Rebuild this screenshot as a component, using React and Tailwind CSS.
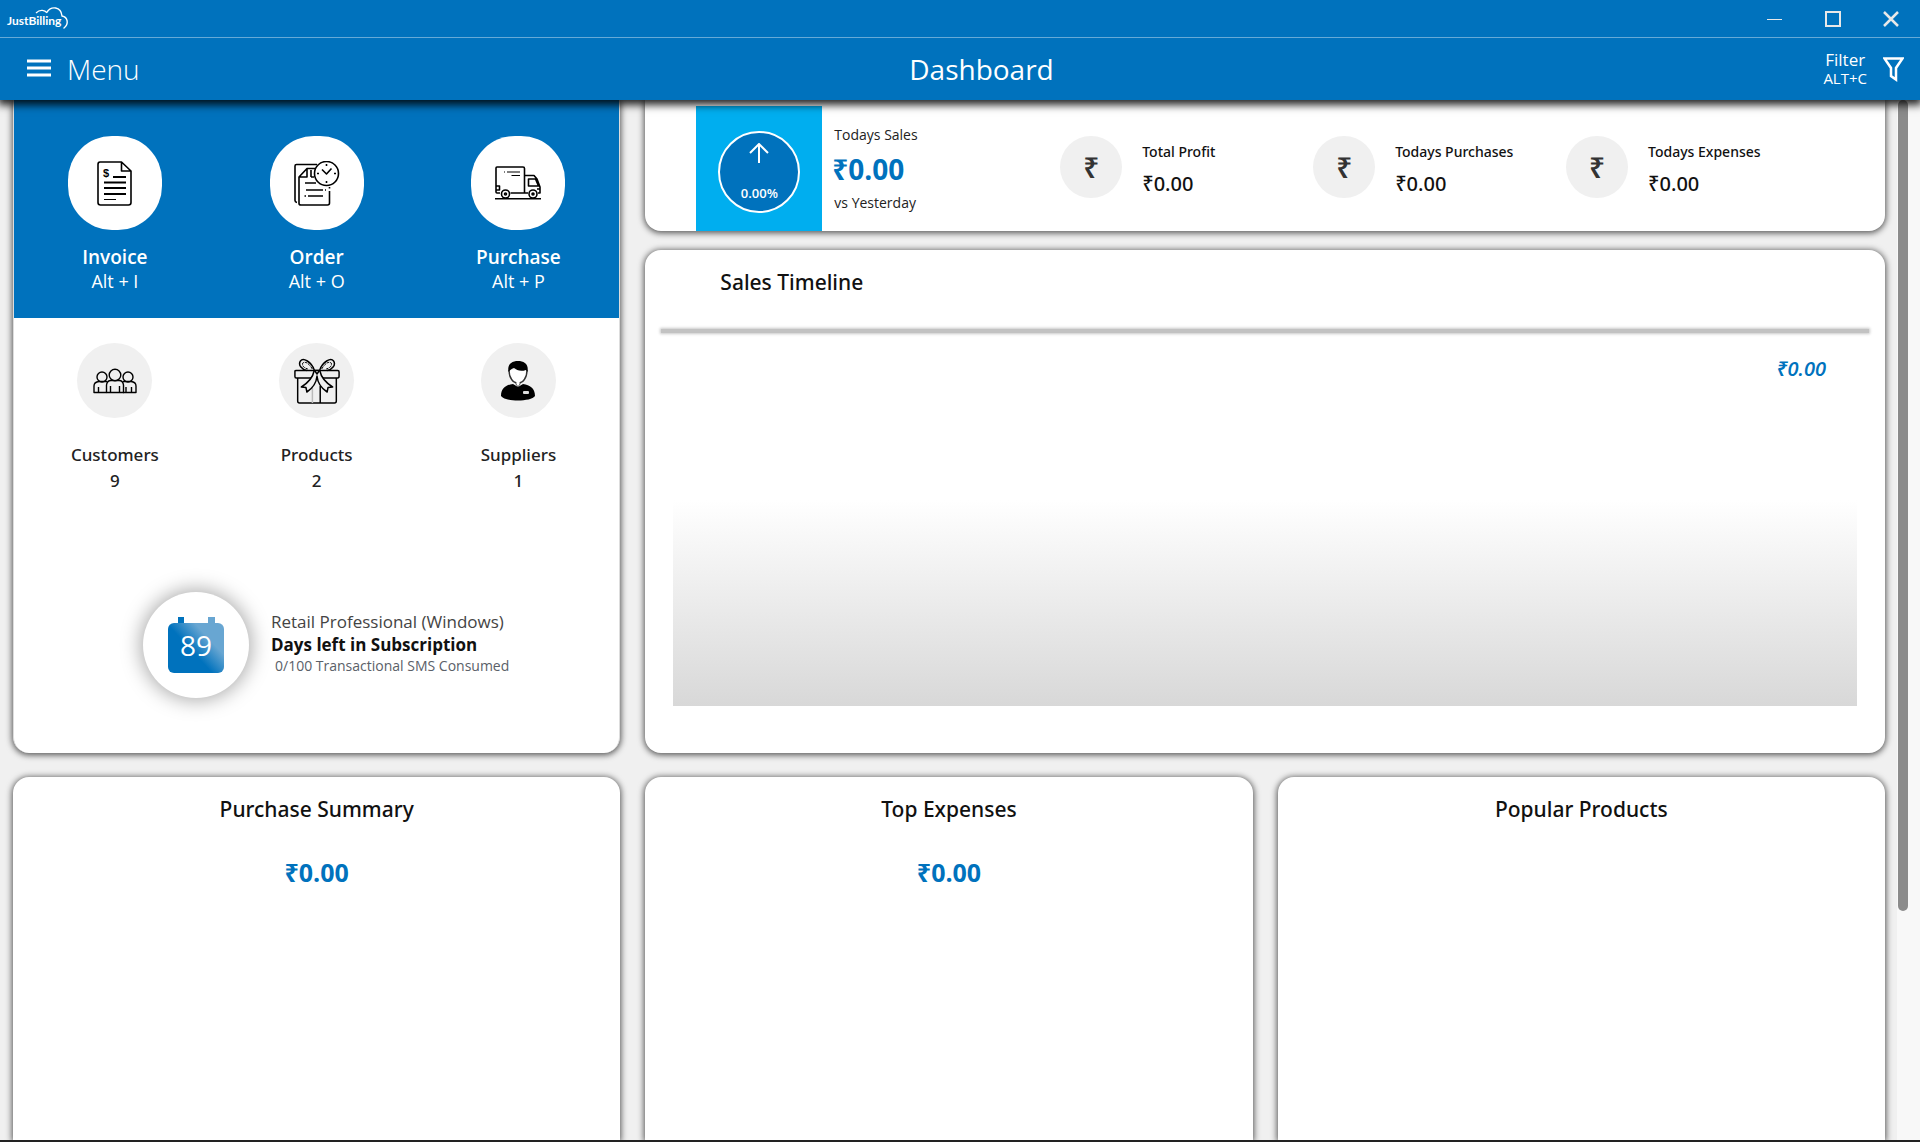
import React from 'react';

const cardShadow = 'rounded-2xl bg-white shadow-[0_1px_6px_1px_rgba(0,0,0,0.65)]';

function Logo() {
  return (
    <svg width="64" height="28" viewBox="0 0 64 28" role="img" aria-label="JustBilling">
      <text x="1" y="20" fill="#fff" fontFamily="Lato" fontWeight="700" fontSize="12">JustBilling</text>
      <path d="M30 8c4-4 9-3 11 0" fill="none" stroke="#fff" strokeWidth="1.2" />
      <path d="M41 7c4-6 14-6 15 4c6 1 7 8 2 12" fill="none" stroke="#fff" strokeWidth="1.4" strokeLinecap="round" />
    </svg>
  );
}

function InvoiceIcon() {
  return (
    <svg width="35" height="45" viewBox="0 0 35 45" fill="none" stroke="#000" strokeWidth="1.6" strokeLinejoin="round">
      <path d="M3 1H24.500L34 10V41.500Q34 44 31.500 44H3.500Q1 44 1 41.500V3.500Q1 1 3 1ZM24.500 1V10H34" />
      <path d="M16 16H29M7 21.500H29M7 27H29M7 33H29" strokeWidth="2" />
      <path d="M7 38.500H19" strokeWidth="1.200" />
      <text x="6" y="16" fill="#000" stroke="none" fontFamily="Liberation Sans" fontWeight="700" fontSize="11">$</text>
    </svg>
  );
}

function OrderIcon() {
  return (
    <svg width="46" height="45" viewBox="0 0 46 45" fill="none" stroke="#000" strokeWidth="1.6" strokeLinejoin="round">
      <path d="M23 3.500H2.500Q1 3.500 1 5V39.500Q1 41 3 41.500" />
      <path d="M22 7.500H13L5 16V42.500Q5 44 7 44H33.500Q35.500 44 35.500 42V30M35.500 27.500V26M13 7.500V16H5M17 16H20M17 9V16" />
      <path d="M11 22H22M12 29H29M14 35H29M10.500 35H12M31 29H32" />
      <circle cx="32.500" cy="12.500" r="12" />
      <path d="M28 8.500L32.500 13L37.500 7.500M32.500 3V5M32.500 20V22M23 12.500H25M40 12.500H42" />
    </svg>
  );
}

function TruckIcon() {
  return (
    <svg width="46" height="34" viewBox="0 0 46 34" fill="none" stroke="#000" strokeWidth="1.6" strokeLinejoin="round">
      <path d="M5 27H2Q1 27 1 26V2Q1 1 2 1H28Q29.500 1 29.500 2.500V27M1 20H4.500V24H1" />
      <path d="M15.500 27H33M29.500 9.500H39L42 13L45 21V27H43M33.500 13H40.500L43.500 20H33.500ZM42 23H45" />
      <path d="M12 6H25M16.500 9.500H25M9 6H10" strokeWidth="1.200" />
      <circle cx="10.500" cy="28" r="4" fill="#fff" />
      <circle cx="10.500" cy="28" r="1" />
      <circle cx="38" cy="28" r="4" fill="#fff" />
      <circle cx="38" cy="28" r="1" />
      <path d="M0 32.700H46" />
    </svg>
  );
}

function CustomersIcon() {
  return (
    <svg width="44" height="26" viewBox="0 0 44 26" fill="none" stroke="#000" strokeWidth="1.4" strokeLinejoin="round">
      <path d="M13.500 24.500H1V18Q1 14 6 13.500H14M30 13.500H38Q43 14 43 18V24.500H30" />
      <path d="M13.500 24.500V17Q14 12.500 18 12.500H26Q30 12.500 30.500 17V24.500ZM17.500 24V18M26.500 24V18M5.500 24V19M38.500 24V19M33 24V19" />
      <circle cx="9" cy="9" r="5" />
      <circle cx="35" cy="9" r="5" />
      <circle cx="22" cy="7" r="5.800" fill="#f0f0f0" />
    </svg>
  );
}

function GiftIcon() {
  return (
    <svg width="46" height="46" viewBox="0 0 50 46" preserveAspectRatio="none" fill="none" stroke="#000" strokeWidth="1.6" strokeLinejoin="round">
      <path d="M4 20V43Q4 45 6 45H44Q46 45 46 43V20M28.500 28V45" />
      <path d="M20 29V45" stroke="#bbb" />
      <path d="M1 13Q1 12.500 2.500 12.500H47.500Q49 12.500 49 14V18Q49 20 47.500 20H2.500Q1 20 1 18.500Z" />
      <path d="M22 12C19 4 10-1 7 3C4 7 9 12 14 12.500M28 12C31 4 40-1 43 3C46 7 41 12 36 12.500" />
      <path d="M20 11C16 5 12 3 9.500 5C8.500 8 11 10 15 11M30 11C34 5 38 3 40.500 5C41.500 8 39 10 35 11" strokeWidth="1" strokeDasharray="3 1" />
      <path d="M22 12.500Q20 22 8 29L13 29.500L14 34Q24 28 25 18Q26 28 36 34L37 29.500L42 29Q30 22 28 12.500Z" fill="#f0f0f0" />
      <path d="M22 12L25 16L28 12" />
    </svg>
  );
}

function SupplierIcon() {
  return (
    <svg width="36" height="42" viewBox="0 0 36 42">
      <path d="M9 10C9 18 13 23 18 23S27 18 27 10" fill="#fff" stroke="#333" strokeWidth="1.4" />
      <path d="M8.500 12C7 4 12 1 18 1S29 4 27.500 12L26 10C20 12 17 10 14 8C11 9 10 10 8.500 12Z" />
      <path d="M1 36C1 28 6 25 13 24L18 27L23 24C30 25 35 28 35 36C31 42 5 42 1 36Z" />
      <path d="M16 22V24L18 27L20 24V22" fill="#fff" stroke="#333" strokeWidth="0.8" />
      <rect x="23" y="31" width="6" height="3" rx="1" fill="#ddd" />
    </svg>
  );
}

function CalendarIcon() {
  return (
    <svg className="col-start-1 row-start-1" width="56" height="56" viewBox="0 0 56 56" aria-hidden="true">
      <defs>
        <linearGradient id="calendar" x1="0.350" y1="0.800" x2="0.900" y2="0.350">
          <stop offset="0.300" stopColor="#0072bd" />
          <stop offset="0.850" stopColor="#68a6d2" />
        </linearGradient>
      </defs>
      <path d="M10 0H16V8H10Z" fill="#0072bd" />
      <path d="M40 0H47V8H40Z" fill="#68a6d2" />
      <rect y="6" width="56" height="50" rx="6" fill="url(#calendar)" />
    </svg>
  );
}

function Action({ icon, name, shortcut }) {
  return (
    <button className="flex flex-col items-center text-white">
      <span className="flex size-[94px] items-center justify-center rounded-[44px] bg-white">{icon}</span>
      <span className="mt-[15px] text-[19px] leading-6 font-semibold">{name}</span>
      <span className="text-lg leading-6">{shortcut}</span>
    </button>
  );
}

function Count({ icon, name, value }) {
  return (
    <div className="flex flex-col items-center font-['Noto_Sans',sans-serif] text-[17px] leading-[26px] font-medium text-[#222]">
      <span className="mb-6 flex size-[75px] items-center justify-center rounded-full bg-[#f0f0f0]">{icon}</span>
      <span>{name}</span>
      <span>{value}</span>
    </div>
  );
}

function Metric({ name }) {
  return (
    <div className="flex items-start gap-5 pt-9">
      <span className="flex size-[62px] shrink-0 items-center justify-center rounded-full bg-[#f0f0f0] text-[28px] font-semibold text-[#333]">₹</span>
      <div className="pt-1.5 font-['Noto_Sans',sans-serif] whitespace-nowrap text-[#111]">
        <div className="text-sm leading-5 font-medium">{name}</div>
        <div className="mt-2 text-xl leading-7 font-medium">₹0.00</div>
      </div>
    </div>
  );
}

function Summary({ title, amount }) {
  return (
    <section className={`${cardShadow} rounded-b-none pt-4 text-center`}>
      <h2 className="font-['Noto_Sans',sans-serif] text-[21px] leading-8 font-medium text-[#111]">{title}</h2>
      {amount && <p className="mt-[31px] text-[25px] leading-8 font-bold text-[#0072bd]">{amount}</p>}
    </section>
  );
}

export default function App() {
  return (
    <div className="flex h-screen flex-col overflow-hidden border-b-2 border-[#222] bg-[#f0f0f0] font-['Open_Sans','Noto_Sans',sans-serif]">
      <header className="relative z-10 shrink-0 bg-[#0072bd] text-white shadow-[0_3px_8px_2px_rgba(0,0,0,0.85)]">
        <div className="flex h-[38px] items-center justify-between border-b border-[#66aad7] pl-1.5">
          <Logo />
          <div className="flex gap-2 pr-1">
            <button className="flex h-9 w-[50px] items-center justify-center" aria-label="Minimize">
              <svg width="16" height="16"><path d="M0 8.500H15" stroke="#e8e8e8" /></svg>
            </button>
            <button className="flex h-9 w-[50px] items-center justify-center" aria-label="Maximize">
              <svg width="16" height="16"><rect x="1" y="1" width="14" height="14" fill="none" stroke="#e8e8e8" strokeWidth="2" /></svg>
            </button>
            <button className="flex h-9 w-[50px] items-center justify-center" aria-label="Close">
              <svg width="16" height="16"><path d="M1 1L15 15M15 1L1 15" stroke="#e8e8e8" strokeWidth="2.500" /></svg>
            </button>
          </div>
        </div>
        <div className="flex h-[62px] items-center justify-between pr-4 pl-[27px]">
          <button className="flex items-center gap-4">
            <svg width="24" height="18" className="mb-0.5"><path d="M0 2H24M0 9H24M0 16H24" stroke="#fff" strokeWidth="3" /></svg>
            <span className="text-[28px] leading-10 font-light">Menu</span>
          </button>
          <h1 className="text-[28px] leading-10">Dashboard</h1>
          <button className="flex items-center gap-4 text-center">
            <span>
              <span className="block text-[17px] leading-[18px]">Filter</span>
              <span className="block text-[15px] leading-[18px]">ALT+C</span>
            </span>
            <svg width="21" height="25" viewBox="0 0 21 25" fill="none" stroke="#fff" strokeWidth="2.5"><path d="M1.500 1.500H19.500L13 11V22.500L8 19V11Z" /></svg>
          </button>
        </div>
      </header>

      <div className="flex min-h-0 flex-1">
        <main className="flex min-w-0 flex-1 flex-col gap-6 pr-3 pl-[13px]">
          <div className="grid grid-cols-3 gap-[25px]">
            <section className={`${cardShadow} flex flex-col overflow-hidden rounded-t-none border-x border-[#ddd] pb-[55px]`}>
              <div className="grid grid-cols-3 bg-[#0072bd] pt-9 pb-[25px]">
                <Action icon={<InvoiceIcon />} name="Invoice" shortcut="Alt + I" />
                <Action icon={<OrderIcon />} name="Order" shortcut="Alt + O" />
                <Action icon={<TruckIcon />} name="Purchase" shortcut="Alt + P" />
              </div>
              <div className="grid grid-cols-3 pt-[25px]">
                <Count icon={<CustomersIcon />} name="Customers" value="9" />
                <Count icon={<GiftIcon />} name="Products" value="2" />
                <Count icon={<SupplierIcon />} name="Suppliers" value="1" />
              </div>
              <div className="mt-auto flex items-center gap-[22px] pl-[129px]">
                <div className="grid size-[106px] shrink-0 place-content-center place-items-center rounded-full bg-white shadow-[0_0_20px_2px_rgba(0,0,0,0.35)]">
                  <CalendarIcon />
                  <span className="col-start-1 row-start-1 text-[28px] leading-8 text-white">89</span>
                </div>
                <div className="pb-1 whitespace-nowrap">
                  <p className="text-[17px] leading-6 text-[#444]">Retail Professional (Windows)</p>
                  <p className="text-[17px] leading-[22px] font-bold text-[#111]">Days left in Subscription</p>
                  <p className="pl-1 text-sm leading-5 text-[#5a6068]">0/100 Transactional SMS Consumed</p>
                </div>
              </div>
            </section>

            <div className="col-span-2 flex flex-col gap-[19px]">
              <section className={`${cardShadow} grid grid-cols-[415fr_253fr_253fr_319fr] rounded-t-none`}>
                <div className="flex gap-2.5 pt-1.5 pl-[51px]">
                  <div className="flex h-[125px] w-[126px] shrink-0 items-center justify-center bg-[#00aeef] pt-1.5">
                    <div className="flex size-[82px] flex-col items-center justify-between rounded-full border-2 border-white bg-[#0072bd] pt-2.5 pb-2 text-white">
                      <svg width="20" height="20" fill="none" stroke="#fff" strokeWidth="2"><path d="M10 20V1M1 10L10 1L19 10" /></svg>
                      <span className="text-[13px] leading-5 font-semibold">0.00%</span>
                    </div>
                  </div>
                  <div className="pt-[19px] whitespace-nowrap text-[#222]">
                    <div className="pl-0.5 text-sm leading-5">Todays Sales</div>
                    <div className="py-1.5 text-[28px] leading-9 font-bold text-[#0072bd]">₹0.00</div>
                    <div className="pl-0.5 text-sm leading-5">vs Yesterday</div>
                  </div>
                </div>
                <Metric name="Total Profit" />
                <Metric name="Todays Purchases" />
                <Metric name="Todays Expenses" />
              </section>

              <section className={`${cardShadow} pt-4 pb-[47px]`}>
                <h2 className="pl-[75px] font-['Noto_Sans',sans-serif] text-[21px] leading-8 font-medium text-[#111]">Sales Timeline</h2>
                <div className="mx-4 mt-[31px] h-1 bg-[#c2c2c2] shadow-[0_0_3px_1px_#c8c8c8]" />
                <p className="mt-5 pr-[59px] text-right text-xl leading-8 font-semibold text-[#0072bd] italic">₹0.00</p>
                <div className="mx-7 mt-[115px] h-[206px] bg-linear-to-b from-white to-[#d8d8d8]" />
              </section>
            </div>
          </div>

          <div className="grid flex-1 grid-cols-3 gap-[25px]">
            <Summary title="Purchase Summary" amount="₹0.00" />
            <Summary title="Top Expenses" amount="₹0.00" />
            <Summary title="Popular Products" />
          </div>
        </main>
        <div className="w-[23px] shrink-0 bg-[#f8f8f8]">
          <div className="ml-px h-[78%] w-2.5 rounded-full bg-[#8b8b8b]" />
        </div>
      </div>
    </div>
  );
}
